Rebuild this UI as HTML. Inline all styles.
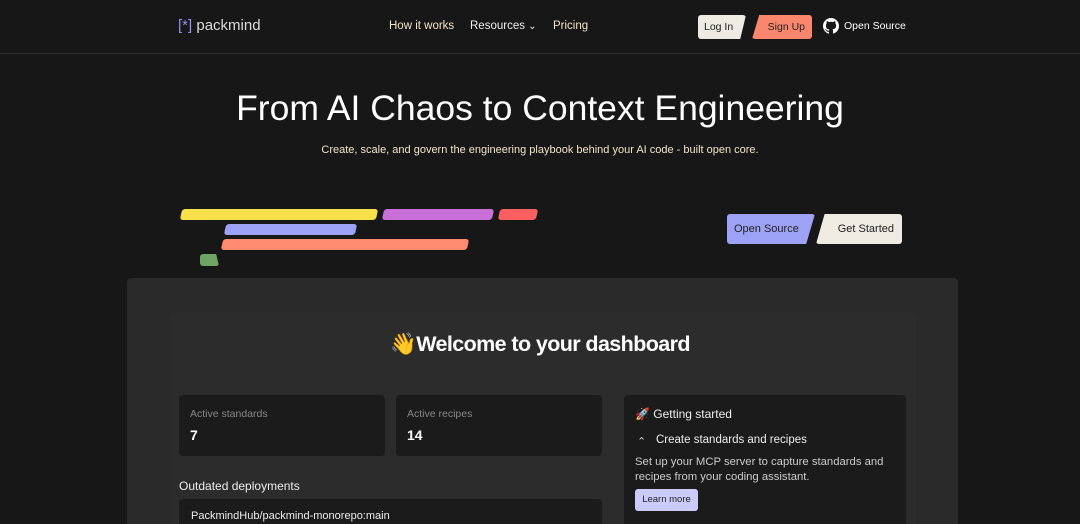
<!DOCTYPE html>
<html style="overflow:hidden;width:1080px;height:524px"><head><style>
*{margin:0;padding:0;box-sizing:border-box}
body{width:1080px;height:524px;overflow:hidden;background:#171717;font-family:"Liberation Sans",sans-serif;color:#eee;position:relative}
.a{position:absolute}
.nav{font-size:11.5px;color:#f3e4c8}
.bar{position:absolute;height:11px;border-radius:3px;transform:skewX(-12deg)}
.card{position:absolute;background:#1b1b1b;border-radius:4px}
.lbl{font-size:10.5px;color:#888}
.num{font-size:14px;font-weight:bold;color:#fff}
</style></head><body>
<div class="a" style="left:0;top:53px;width:1080px;height:1px;background:#2e2e2e"></div>
<div class="a" style="left:178px;top:17px;font-size:15px;color:#ddd"><span style="color:#8f94f0">[*]</span> packmind</div>
<div class="a nav" style="left:389px;top:20px">How it works</div>
<div class="a nav" style="left:470px;top:20px;color:#eee">Resources <span style="font-size:10px">&#8964;</span></div>
<div class="a nav" style="left:553px;top:20px">Pricing</div>
<div class="a" style="left:698px;top:15px;width:48px;height:24px;background:#efebe3;border-radius:3px;clip-path:polygon(0 0,100% 0,88% 100%,0 100%);color:#222;font-size:10.5px;line-height:24px;padding-left:6px">Log In</div>
<div class="a" style="left:752px;top:15px;width:60px;height:24px;background:#fa876d;border-radius:3px;clip-path:polygon(12% 0,100% 0,100% 100%,0 100%);color:#222;font-size:10.5px;line-height:24px;text-align:right;padding-right:7px">Sign Up</div>
<svg class="a" style="left:823px;top:18px" width="16" height="16" viewBox="0 0 16 16"><path fill="#fff" d="M8 0C3.6 0 0 3.6 0 8c0 3.5 2.3 6.5 5.5 7.6.4.1.5-.2.5-.4v-1.4c-2.200.5-2.700-1-2.700-1-.4-.9-.9-1.200-.9-1.200-.7-.5.1-.5.1-.5.8.1 1.200.8 1.200.8.7 1.200 1.900.9 2.300.7.1-.5.3-.9.5-1.100-1.800-.2-3.600-.9-3.600-4 0-.9.3-1.600.8-2.100-.1-.2-.4-1 .1-2.100 0 0 .7-.2 2.200.8.6-.2 1.300-.3 2-.3s1.400.1 2 .3c1.500-1 2.200-.8 2.200-.8.4 1.100.2 1.900.1 2.100.5.6.8 1.300.8 2.100 0 3.100-1.900 3.700-3.600 3.900.3.3.5.8.5 1.500v2.200c0 .2.1.5.6.4C13.700 14.500 16 11.500 16 8c0-4.400-3.600-8-8-8z"/></svg>
<div class="a" style="left:844px;top:20px;font-size:10.5px;color:#fff">Open Source</div>

<div class="a" style="left:0;width:1080px;top:88px;text-align:center;font-size:35.5px;color:#fff">From AI Chaos to Context Engineering</div>
<div class="a" style="left:0;width:1080px;top:144px;text-align:center;font-size:11px;color:#f3e4c8">Create, scale, and govern the engineering playbook behind your AI code - built open core.</div>

<div class="bar" style="left:181px;top:209px;width:196px;background:#f7e04a"></div>
<div class="bar" style="left:383px;top:209px;width:110px;background:#c86fd8"></div>
<div class="bar" style="left:499px;top:209px;width:38px;background:#fb5f5f"></div>
<div class="bar" style="left:225px;top:224px;width:131px;background:#9ea2f7"></div>
<div class="bar" style="left:222px;top:239px;width:246px;background:#ff8a70"></div>
<div class="bar" style="left:200px;top:254px;width:19px;height:12px;background:#6fa464;transform:none;border-radius:3px;clip-path:polygon(0 0,85% 0,100% 100%,0 100%)"></div>

<div class="a" style="left:727px;top:214px;width:88px;height:30px;background:#9ea2f7;border-radius:3px;clip-path:polygon(0 0,100% 0,90% 100%,0 100%);color:#222;font-size:11px;line-height:30px;padding-left:7px">Open Source</div>
<div class="a" style="left:816px;top:214px;width:86px;height:30px;background:#efebe3;border-radius:3px;clip-path:polygon(10% 0,100% 0,100% 100%,0 100%);color:#222;font-size:11px;line-height:30px;text-align:right;padding-right:8px">Get Started</div>

<div class="a" style="left:127px;top:278px;width:831px;height:246px;background:#2a2a2a;border-radius:4px 4px 0 0"></div>
<div class="a" style="left:170px;top:312px;width:746px;height:212px;background:#2c2c2c;border-radius:6px 6px 0 0"></div>
<div class="a" style="left:0;width:1080px;top:332px;text-align:center;font-size:21.5px;font-weight:bold;color:#fff;letter-spacing:-0.6px">👋Welcome to your dashboard</div>

<div class="card" style="left:179px;top:395px;width:206px;height:61px"></div>
<div class="a lbl" style="left:190px;top:408px">Active standards</div>
<div class="a num" style="left:190px;top:427px">7</div>
<div class="card" style="left:396px;top:395px;width:206px;height:61px"></div>
<div class="a lbl" style="left:407px;top:408px">Active recipes</div>
<div class="a num" style="left:407px;top:427px">14</div>

<div class="a" style="left:179px;top:479px;font-size:12px;color:#eee">Outdated deployments</div>
<div class="card" style="left:179px;top:499px;width:423px;height:30px"></div>
<div class="a" style="left:191px;top:510px;font-size:11px;color:#eee">PackmindHub/packmind-monorepo:main</div>

<div class="card" style="left:624px;top:395px;width:282px;height:140px"></div>
<div class="a" style="left:635px;top:407px;font-size:12px;color:#eee">🚀 Getting started</div>
<div class="a" style="left:637px;top:435px;font-size:11px;color:#ccc">&#8963;</div>
<div class="a" style="left:656px;top:434px;font-size:11.5px;color:#eee">Create standards and recipes</div>
<div class="a" style="left:635px;top:455px;font-size:11.3px;color:#ccc;width:268px;line-height:15px">Set up your MCP server to capture standards and recipes from your coding assistant.</div>
<div class="a" style="left:635px;top:489px;width:63px;height:22px;background:#cbcbfb;border-radius:3px;color:#222;font-size:9.5px;line-height:22px;text-align:center">Learn more</div>
</body></html>
